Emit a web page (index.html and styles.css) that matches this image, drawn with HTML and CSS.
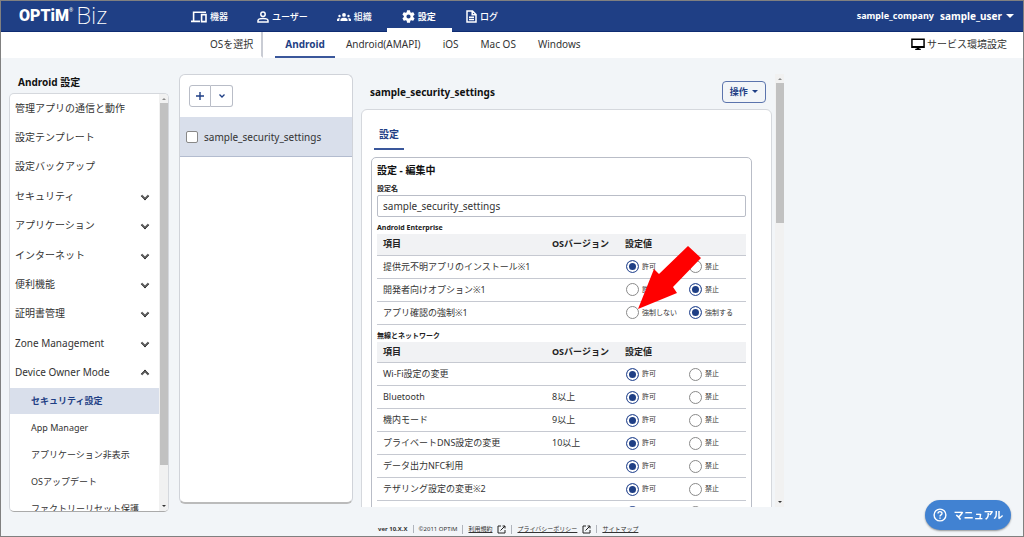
FILE: index.html
```html
<!DOCTYPE html>
<html lang="ja">
  <head>
    <meta charset="UTF-8" />
    <meta name="viewport" content="width=device-width, initial-scale=1.0" />
    <title>OPTiM Biz</title>
    <link rel="stylesheet" href="styles.css">
  </head>
  <body>
    <header class="header">
      <a class="logo" href="#"><span class="logo-name">OPTiM</span><sup>®</sup><span class="logo-biz">Biz</span></a>
      <nav class="main-nav">
        <a href="#">
          <svg width="16" height="12" viewBox="0 0 16 12" fill="none" stroke="currentColor" stroke-width="1.6"><path d="M2.6 9.500V1.2H15M0 10.4h9"/><path d="M10.6 3.6h4.4v7h-4.4z"/></svg>
          機器
        </a>
        <a href="#">
          <svg width="12" height="12" viewBox="0 0 12 12" fill="none" stroke="currentColor" stroke-width="1.5"><circle cx="6" cy="3.3" r="2.2"/><path d="M1 10.9V9.6C1 8 4 7.4 6 7.4s5 .6 5 2.2v1.3z"/></svg>
          ユーザー
        </a>
        <a href="#">
          <svg width="14" height="12" viewBox="0 0 14 12" fill="currentColor"><circle cx="2.500" cy="5" r="1.200"/><circle cx="7" cy="3.900" r="1.900"/><circle cx="11.500" cy="5" r="1.200"/><path d="M3.400 10V8.800C3.400 7.400 5.500 6.800 7 6.800s3.600.6 3.600 2V10zM0 10V8.700c0-1.200 1.500-1.600 3-1.500-.5.500-.7 1-.7 1.700V10zM14 10V8.700c0-1.200-1.500-1.600-3-1.500.5.500.7 1 .7 1.700V10z"/></svg>
          組織
        </a>
        <a class="active" href="#">
          <svg width="13" height="13" viewBox="2 2 20 20" fill="currentColor"><path d="M19.140 12.940c.04-.3.060-.610.060-.940s-.020-.640-.070-.940l2.030-1.580a.49.49 0 0 0 .12-.61l-1.920-3.320a.49.49 0 0 0-.59-.22l-2.390.96a7 7 0 0 0-1.620-.94l-.36-2.540A.48.48 0 0 0 13.920 2.400h-3.840a.48.48 0 0 0-.47.41l-.36 2.540a7.300 7.300 0 0 0-1.620.94l-2.390-.96a.48.48 0 0 0-.59.22L2.740 8.870a.48.48 0 0 0 .12.61l2.030 1.580a6 6 0 0 0 0 1.880l-2.030 1.580a.49.49 0 0 0-.12.61l1.920 3.320c.12.22.37.29.59.22l2.390-.96c.5.38 1.030.7 1.620.94l.36 2.540c.05.24.24.41.47.41h3.840c.24 0 .44-.17.47-.41l.36-2.540a7 7 0 0 0 1.620-.94l2.390.96c.22.08.47 0 .59-.22l1.920-3.320a.48.48 0 0 0-.12-.61zM12 15.200A3.200 3.200 0 1 1 12 8.800a3.200 3.200 0 0 1 0 6.400z"/></svg>
          設定
        </a>
        <a href="#">
          <svg width="11" height="13" viewBox="0 0 11 13" fill="none" stroke="currentColor" stroke-width="1.500"><path d="M1 1h5.500L10 4.500V12H1zM6.200 1v3.800H10M3 7.200h5M3 9.600h5"/></svg>
          ログ
        </a>
      </nav>
      <div class="account">
        <span class="company">sample_company</span>
        <button class="user" type="button">sample_user <i class="caret"></i></button>
      </div>
    </header>

    <nav class="sub-nav">
      <span class="os-label">OSを選択</span>
      <a class="active" href="#">Android</a>
      <a href="#">Android(AMAPI)</a>
      <a href="#">iOS</a>
      <a href="#">Mac OS</a>
      <a href="#">Windows</a>
      <a class="env" href="#">
        <svg width="14" height="13" viewBox="0 0 15 13"><path d="M1 1h13v8.500H1z" fill="none" stroke="#000" stroke-width="1.600"/><path d="M1 8h13v1.800H1zM6 9.500h3v1.500h1.500v1.500h-6V11H6z"/></svg>
        サービス環境設定
      </a>
    </nav>

    <main class="main">
      <aside class="sidebar">
        <h2>Android 設定</h2>
        <div class="side-box">
          <div class="side-scroll">
            <ul class="menu">
              <li><a href="#">管理アプリの通信と動作</a></li>
              <li><a href="#">設定テンプレート</a></li>
              <li><a href="#">設定バックアップ</a></li>
              <li><a href="#">セキュリティ<i class="chevron"></i></a></li>
              <li><a href="#">アプリケーション<i class="chevron"></i></a></li>
              <li><a href="#">インターネット<i class="chevron"></i></a></li>
              <li><a href="#">便利機能<i class="chevron"></i></a></li>
              <li><a href="#">証明書管理<i class="chevron"></i></a></li>
              <li><a href="#">Zone Management<i class="chevron"></i></a></li>
              <li><a href="#">Device Owner Mode<i class="chevron up"></i></a></li>
            </ul>
            <ul class="submenu">
              <li><a class="active" href="#">セキュリティ設定</a></li>
              <li><a href="#">App Manager</a></li>
              <li><a href="#">アプリケーション非表示</a></li>
              <li><a href="#">OSアップデート</a></li>
              <li><a href="#">ファクトリーリセット保護</a></li>
            </ul>
          </div>
          <div class="scrollbar side-bar"><i class="arrow-up"></i><span class="thumb"></span><i class="arrow-down"></i></div>
        </div>
      </aside>

      <section class="list">
        <div class="toolbar">
          <button type="button" aria-label="追加"><svg width="8" height="8" viewBox="0 0 8 8" stroke="#1f3f85" stroke-width="1.400"><path d="M4 0v8M0 4h8"/></svg></button>
          <button type="button" aria-label="メニュー"><svg width="6" height="4" viewBox="0 0 6 4" fill="none" stroke="#1f3f85" stroke-width="1.300"><path d="M.5.500L3 3 5.500.500"/></svg></button>
        </div>
        <label class="list-row"><input type="checkbox">sample_security_settings</label>
      </section>

      <section class="detail">
        <div class="detail-view">
          <div class="detail-head">
            <h1>sample_security_settings</h1>
            <button class="action" type="button">操作 <i class="caret"></i></button>
          </div>
          <div class="card">
            <div class="tabs"><a href="#">設定</a></div>
            <form class="form">
              <h3>設定 - 編集中</h3>
              <label class="field-label" for="name">設定名</label>
              <input class="field" id="name" type="text" value="sample_security_settings">

              <h4>Android Enterprise</h4>
              <table>
                <thead>
                  <tr><th class="item">項目</th><th class="version">OSバージョン</th><th>設定値</th></tr>
                </thead>
                <tbody>
                  <tr><td>提供元不明アプリのインストール※1</td><td></td><td><div class="radios"><label><input type="radio" name="r1" checked>許可</label><label><input type="radio" name="r1">禁止</label></div></td></tr>
                  <tr><td>開発者向けオプション※1</td><td></td><td><div class="radios"><label><input type="radio" name="r2">許可</label><label><input type="radio" name="r2" checked>禁止</label></div></td></tr>
                  <tr>
                    <td>アプリ確認の強制※1</td><td></td>
                    <td><div class="radios"><label class="target"><input type="radio" name="r3">強制しない<svg class="pointer" width="64" height="64" viewBox="0 0 64 64"><path d="M50 0L63 12 35 41 39 47 0 63 16 23 21 28z" fill="#f00"/></svg></label><label><input type="radio" name="r3" checked>強制する</label></div></td>
                  </tr>
                </tbody>
              </table>

              <h4>無線とネットワーク</h4>
              <table>
                <thead>
                  <tr><th class="item">項目</th><th class="version">OSバージョン</th><th>設定値</th></tr>
                </thead>
                <tbody>
                  <tr><td>Wi-Fi設定の変更</td><td></td><td><div class="radios"><label><input type="radio" name="r4" checked>許可</label><label><input type="radio" name="r4">禁止</label></div></td></tr>
                  <tr><td>Bluetooth</td><td>8以上</td><td><div class="radios"><label><input type="radio" name="r5" checked>許可</label><label><input type="radio" name="r5">禁止</label></div></td></tr>
                  <tr><td>機内モード</td><td>9以上</td><td><div class="radios"><label><input type="radio" name="r6" checked>許可</label><label><input type="radio" name="r6">禁止</label></div></td></tr>
                  <tr><td>プライベートDNS設定の変更</td><td>10以上</td><td><div class="radios"><label><input type="radio" name="r7" checked>許可</label><label><input type="radio" name="r7">禁止</label></div></td></tr>
                  <tr><td>データ出力NFC利用</td><td></td><td><div class="radios"><label><input type="radio" name="r8" checked>許可</label><label><input type="radio" name="r8">禁止</label></div></td></tr>
                  <tr><td>テザリング設定の変更※2</td><td></td><td><div class="radios"><label><input type="radio" name="r9" checked>許可</label><label><input type="radio" name="r9">禁止</label></div></td></tr>
                  <tr><td></td><td></td><td><div class="radios"><label><input type="radio" name="r10" aria-label="許可" checked></label><label><input type="radio" name="r10" aria-label="禁止"></label></div></td></tr>
                </tbody>
              </table>
            </form>
          </div>
        </div>
        <div class="scrollbar detail-bar"><i class="arrow-up"></i><span class="thumb"></span><i class="arrow-down"></i></div>
      </section>
    </main>

    <footer class="footer">
      <b>ver 10.X.X</b>
      <span>©2011 OPTiM</span>
      <span><a href="#">利用規約</a><svg width="9" height="9" viewBox="0 0 9 9" fill="none" stroke="#222"><path d="M4 1H1v7h7V5M5.500 1H8v2.500M8 1L3.500 5.500"/></svg></span>
      <span><a href="#">プライバシーポリシー</a><svg width="9" height="9" viewBox="0 0 9 9" fill="none" stroke="#222"><path d="M4 1H1v7h7V5M5.500 1H8v2.500M8 1L3.500 5.500"/></svg></span>
      <span><a href="#">サイトマップ</a></span>
    </footer>

    <button class="manual" type="button">
      <svg width="14" height="14" viewBox="0 0 14 14" fill="none" stroke="#fff" stroke-width="1.400"><circle cx="7" cy="7" r="5.900"/><path d="M5 5.600C5 3 9 3.100 9 5.400 9 6.900 7 6.900 7 8.500M7 9.500v1.300"/></svg>
      マニュアル
    </button>
  </body>
</html>
```
FILE: styles.css
```css
* {
  box-sizing: border-box;
}

body {
  display: flex;
  flex-direction: column;
  height: 100vh;
  margin: 0;
  border: 1px solid #808080;
  background: #f2f5f8;
  color: #333;
  font-family: "Noto Sans", "Noto Sans CJK JP", sans-serif;
  font-size: 10px;
  line-height: 14px;
  overflow: hidden;
}

a {
  color: inherit;
  text-decoration: none;
}

ul,
h1,
h2,
h3,
h4 {
  margin: 0;
  padding: 0;
  list-style: none;
}

button {
  margin: 0;
  padding: 0;
  border: 0;
  background: none;
  color: inherit;
  font: inherit;
  cursor: pointer;
}

.caret {
  display: inline-block;
  border: 4px solid transparent;
  border-top-color: currentColor;
  border-bottom: 0;
}

/* header */
.header {
  display: flex;
  flex: none;
  height: 31px;
  background: #1f3f85;
  border-bottom: 1px solid #0f2c72;
  color: #fff;
}

.logo {
  display: flex;
  align-items: center;
  width: 176px;
  padding-left: 18px;
}

.logo-name {
  font: 900 16px/30px Roboto, sans-serif;
}

.logo sup {
  align-self: flex-start;
  font-size: 5px;
  line-height: 18px;
}

.logo-biz {
  margin-left: 3px;
  padding-bottom: 2px;
  font-size: 24px;
  font-weight: 200;
}

.main-nav {
  display: flex;
  height: 31px;
}

.main-nav a {
  display: flex;
  align-items: center;
  gap: 3px;
  padding: 0 15px 0 14px;
  font-size: 9px;
  font-weight: 500;
  border-top: 4px solid transparent;
  border-bottom: 4px solid transparent;
}

.main-nav a.active {
  padding: 0 16px 0 15px;
  border-bottom-color: #fff;
  font-weight: 700;
}

.account {
  display: flex;
  align-items: center;
  gap: 6px;
  margin-left: auto;
  padding-right: 9px;
  font-weight: 700;
}

.company {
  font-size: 9px;
}

.user {
  display: flex;
  align-items: center;
  gap: 4px;
}

/* os tabs */
.sub-nav {
  display: flex;
  flex: none;
  height: 26px;
  padding: 0 16px 0 209px;
  background: #fff;
}

.sub-nav a,
.os-label {
  display: flex;
  align-items: center;
  padding: 0 11px;
  border-bottom: 2px solid transparent;
}

.sub-nav .os-label {
  margin-right: 12px;
  padding: 0 8px 0 0;
  border-right: 2px solid #c9ccd4;
}

.sub-nav a.active {
  padding: 0 10px;
  border-bottom-color: #3a579b;
  color: #1f3f85;
  font-weight: 700;
}

.sub-nav .env {
  gap: 2px;
  margin-left: auto;
  padding: 0;
}

.main {
  display: flex;
  flex: 1;
  min-height: 0;
  padding: 16px 0 0 8px;
}

/* left menu */
.sidebar {
  display: flex;
  flex-direction: column;
  width: 160px;
  margin-bottom: 10px;
}

.sidebar h2 {
  padding: 1px 0 4px 9px;
  color: #111;
  font-size: 10px;
}

.side-box {
  display: flex;
  flex: 1;
  min-height: 0;
  border: 1px solid #d5d8dd;
  border-bottom-color: #aaa;
  border-radius: 5px;
  background: #fff;
  overflow: hidden;
}

.side-scroll {
  flex: 1;
  overflow: hidden;
}

.menu {
  display: grid;
  grid-auto-rows: 1fr;
  height: 294px;
}

.menu a {
  display: flex;
  align-items: center;
  justify-content: space-between;
  height: 100%;
  padding: 0 11px 2px 5px;
}

.chevron {
  width: 6px;
  height: 6px;
  border: solid #111;
  border-width: 0 1px 1px 0;
  box-shadow: inset -1px -1px 0 #555;
  transform: rotate(45deg);
}

.chevron.up {
  margin-top: 4px;
  transform: rotate(225deg);
}

.submenu {
  display: grid;
  gap: 1px;
}

.submenu a {
  display: block;
  height: 26px;
  padding-left: 21px;
  font-size: 9px;
  line-height: 25px;
  white-space: nowrap;
}

.submenu a.active {
  background: #d9dfeb;
  color: #1f3f85;
  font-weight: 700;
}

.scrollbar {
  display: flex;
  flex: none;
  flex-direction: column;
  align-items: center;
  width: 9px;
  background: #f1f1f1;
}

.scrollbar .thumb {
  width: 8px;
  background: #c1c1c1;
}

.arrow-up,
.arrow-down {
  margin: 4px 0 3px;
  border: 2px solid transparent;
  border-top: 0;
  border-bottom-color: #8a8a8a;
}

.arrow-down {
  margin: auto 0 4px;
  border-top: 2px solid #333;
  border-bottom: 0;
}

.side-bar .thumb {
  height: 362px;
}

.detail-bar .thumb {
  height: 140px;
}

/* setting list */
.list {
  width: 174px;
  margin: 0 8px 18px 10px;
  border: 1px solid #d0d3d9;
  border-bottom: 2px solid #bbb;
  border-radius: 6px;
  background: #fff;
}

.toolbar {
  display: flex;
  padding: 10px 9px;
}

.toolbar button {
  display: flex;
  align-items: center;
  justify-content: center;
  width: 22px;
  height: 22px;
  border: 1px solid #b9bdc7;
  border-radius: 3px 0 0 3px;
}

.toolbar button + button {
  border-left: 0;
  border-radius: 0 3px 3px 0;
}

.list-row {
  display: flex;
  align-items: center;
  gap: 6px;
  height: 40px;
  padding-left: 6px;
  background: #d9dfeb;
  border-bottom: 1px solid #b3bccf;
}

.list-row input {
  appearance: none;
  width: 12px;
  height: 12px;
  margin: 0;
  border: 1px solid #888;
  border-radius: 2px;
  background: #fff;
}

/* setting detail */
.detail {
  display: flex;
  gap: 3px;
  width: 423px;
  margin-bottom: 15px;
}

.detail-view {
  flex: 1;
  overflow: hidden;
}

.detail-head {
  display: flex;
  align-items: center;
  justify-content: space-between;
  height: 35px;
  padding: 0 6px 0 9px;
}

.detail-head h1 {
  color: #111;
  font-size: 10px;
}

.action {
  height: 22px;
  padding: 0 7px;
  border: 1px solid #5b74ad;
  border-radius: 4px;
  color: #1f3f85;
  font-size: 9px;
  font-weight: 700;
}

.action .caret {
  margin: 0 0 2px 2px;
  border-width: 3px 3px 0;
}

.card {
  padding: 10px 19px 10px 9px;
  border: 1px solid #d5d8dd;
  border-radius: 6px;
  background: #fff;
}

.tabs {
  display: flex;
  padding-left: 3px;
}

.tabs a {
  padding: 7px 5px;
  border-bottom: 2px solid #3a579b;
  color: #1f3f85;
  font-weight: 700;
}

.form {
  margin-top: 7px;
  padding: 5px;
  border: 1px solid #b9bdc7;
  border-radius: 5px;
}

.form h3 {
  color: #111;
  font-size: 10px;
}

.field-label,
.form h4 {
  display: block;
  color: #222;
  font-size: 7px;
  font-weight: 700;
  line-height: 12px;
}

.field-label {
  margin-top: 6px;
}

.form h4 {
  margin-top: 5px;
}

.field {
  display: block;
  width: 100%;
  height: 22px;
  padding: 0 5px;
  border: 1px solid #b9bdc7;
  border-radius: 2px;
  color: #333;
  font: inherit;
}

table {
  width: 100%;
  border-collapse: collapse;
  table-layout: fixed;
  font-size: 9px;
}

th,
td {
  height: 23px;
  padding: 0 0 0 6px;
  border-bottom: 1px solid #c6c9d1;
  text-align: left;
}

th {
  height: 21px;
  background: #f1f2f4;
  color: #222;
}

.item {
  width: 169px;
}

.version {
  width: 73px;
}

.radios {
  display: flex;
  padding-left: 1px;
}

.radios label {
  position: relative;
  display: flex;
  flex: none;
  align-items: center;
  gap: 3px;
  width: 63px;
  font-size: 7px;
  white-space: nowrap;
}

.radios label:last-child {
  width: auto;
}

.radios input {
  appearance: none;
  width: 13px;
  height: 13px;
  margin: 0;
  border: 1px solid #8a8a8a;
  border-radius: 50%;
}

.radios input:checked {
  border-color: #3a579b;
  background: #1f3f85;
  box-shadow: inset 0 0 0 2px #fff;
}

/* red arrow over the option to choose */
.target {
  z-index: 1;
}

.pointer {
  position: absolute;
  left: 12px;
  bottom: 10px;
}

.footer {
  display: flex;
  flex: none;
  align-items: center;
  height: 14px;
  padding-left: 377px;
  font-size: 6px;
  line-height: 8px;
}

.footer span {
  display: flex;
  align-items: center;
  gap: 5px;
  margin-left: 5px;
  padding-left: 5px;
  border-left: 1px solid #b0b4bc;
}

.footer a {
  text-decoration: underline;
}

.manual {
  position: fixed;
  right: 13px;
  bottom: 7px;
  display: flex;
  align-items: center;
  justify-content: center;
  gap: 7px;
  width: 86px;
  height: 30px;
  border-radius: 15px;
  background: #4182d2;
  box-shadow: 0 1px 2px rgba(0, 0, 0, 0.4);
  color: #fff;
  font-weight: 700;
}
```
